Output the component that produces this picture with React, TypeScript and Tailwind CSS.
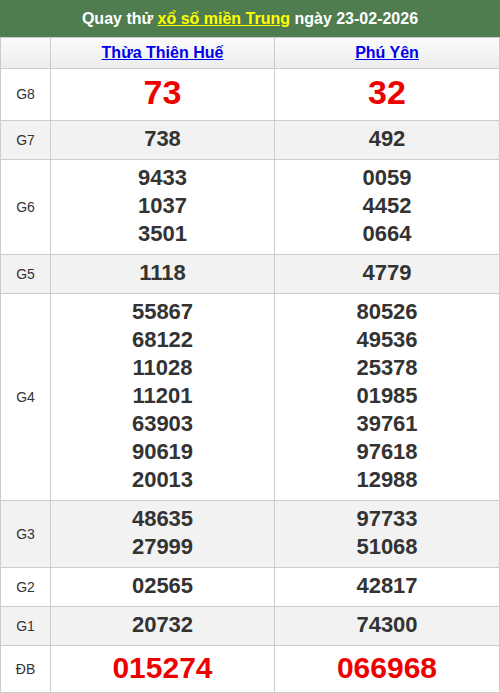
const provinces = ["Thừa Thiên Huế", "Phú Yên"];

type Prize = { label: string; values: string[][]; kind?: "g8" | "db"; shade?: boolean };

const prizes: Prize[] = [
  { label: "G8", values: [["73"], ["32"]], kind: "g8" },
  { label: "G7", values: [["738"], ["492"]], shade: true },
  { label: "G6", values: [["9433", "1037", "3501"], ["0059", "4452", "0664"]] },
  { label: "G5", values: [["1118"], ["4779"]], shade: true },
  {
    label: "G4",
    values: [
      ["55867", "68122", "11028", "11201", "63903", "90619", "20013"],
      ["80526", "49536", "25378", "01985", "39761", "97618", "12988"],
    ],
  },
  { label: "G3", values: [["48635", "27999"], ["97733", "51068"]], shade: true },
  { label: "G2", values: [["02565"], ["42817"]] },
  { label: "G1", values: [["20732"], ["74300"]], shade: true },
  { label: "ĐB", values: [["015274"], ["066968"]], kind: "db" },
];

function numberClass(kind?: Prize["kind"]) {
  if (kind === "g8") return "text-[34px] leading-[41px] text-[#ee0000]";
  if (kind === "db") return "text-[30px] leading-[36px] text-[#ee0000]";
  return "text-[22px] leading-[28px] text-[#333]";
}

function cellPadding(kind?: Prize["kind"]) {
  if (kind === "g8") return "pt-[3px] pb-[7px]";
  return "pt-[4px] pb-[6px]";
}

export default function App() {
  return (
    <div className="w-[500px] bg-white font-['Liberation_Sans',Arial,sans-serif]">
      <div className="h-[37px] bg-[#4f7d4f] flex items-center justify-center text-[16px] font-bold text-white">
        Quay thử&nbsp;
        <a href="#" className="text-[#ffff00] underline">
          xổ số miền Trung
        </a>
        &nbsp;ngày 23-02-2026
      </div>

      <table className="w-[500px] border-collapse table-fixed">
        <colgroup>
          <col className="w-[50px]" />
          <col className="w-[224px]" />
          <col />
        </colgroup>
        <thead>
          <tr className="bg-gradient-to-b from-[#fbfbfb] to-[#ececec]">
            <th className="h-[31px] border border-[#cccccc]" />
            {provinces.map((p) => (
              <th key={p} className="h-[31px] border border-[#cccccc] p-0 text-[16px] font-bold">
                <a href="#" className="text-[#0000ee] underline">
                  {p}
                </a>
              </th>
            ))}
          </tr>
        </thead>
        <tbody>
          {prizes.map((row) => (
            <tr key={row.label} className={row.shade ? "bg-[#f2f2f2]" : "bg-white"}>
              <td className="border border-[#cccccc] text-center text-[14px] text-[#333]">
                {row.label}
              </td>
              {row.values.map((vals, i) => (
                <td key={i} className={`border border-[#cccccc] text-center ${cellPadding(row.kind)}`}>
                  {vals.map((v) => (
                    <div key={v} className={`font-bold ${numberClass(row.kind)}`}>
                      {v}
                    </div>
                  ))}
                </td>
              ))}
            </tr>
          ))}
        </tbody>
      </table>
    </div>
  );
}
